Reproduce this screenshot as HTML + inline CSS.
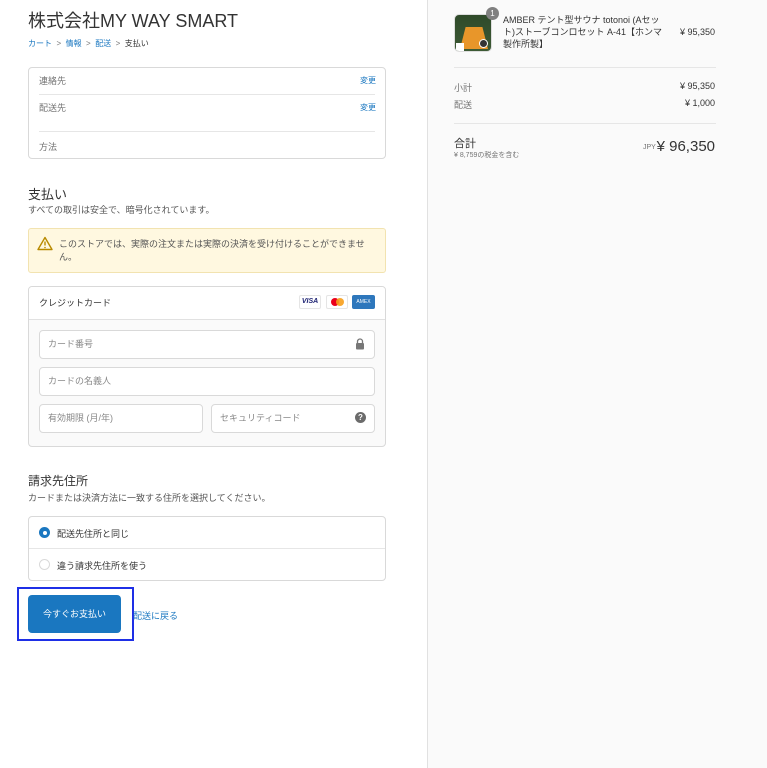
<!DOCTYPE html><html><head><meta charset="utf-8"><style>
*{margin:0;padding:0;box-sizing:border-box}
body{width:767px;height:768px;background:#fff;font-family:"Liberation Sans","Noto Sans CJK JP",sans-serif;color:#333;position:relative;overflow:hidden;font-size:9px}
.a{position:absolute;white-space:nowrap}
.r{position:absolute;white-space:nowrap;right:52px;text-align:right}
.box{position:absolute;border:1px solid #d9d9d9;border-radius:4px;background:#fff}
.hr{position:absolute;height:1px;background:#e6e6e6}
.lbl{color:#737373}
.blue{color:#1a77c0}
.in{position:absolute;border:1px solid #d9d9d9;border-radius:4px;background:#fff;color:#888;font-size:9px;padding-left:8px;line-height:27px}
</style></head><body>
<div class="a" style="left:427px;top:0;width:340px;height:768px;background:#fafafa;border-left:1px solid #e1e1e1"></div>
<div class="a" style="left:28px;top:7px;font-size:18px;color:#333">株式会社MY WAY SMART</div>
<div class="a" style="left:28px;top:38px;font-size:8px"><span class="blue">カート</span> <span style="color:#777">&nbsp;&gt;&nbsp;</span> <span class="blue">情報</span> <span style="color:#777">&nbsp;&gt;&nbsp;</span> <span class="blue">配送</span> <span style="color:#777">&nbsp;&gt;&nbsp;</span> 支払い</div>

<div class="box" style="left:28px;top:67px;width:358px;height:92px"></div>
<div class="a lbl" style="left:39px;top:74px">連絡先</div><div class="a blue" style="left:360px;top:75px;font-size:8px">変更</div>
<div class="hr" style="left:39px;top:94px;width:336px"></div>
<div class="a lbl" style="left:39px;top:101px">配送先</div><div class="a blue" style="left:360px;top:102px;font-size:8px">変更</div>
<div class="hr" style="left:39px;top:131px;width:336px"></div>
<div class="a lbl" style="left:39px;top:140px">方法</div>

<div class="a" style="left:28px;top:184px;font-size:13px">支払い</div>
<div class="a" style="left:28px;top:203px;font-size:9px;color:#555">すべての取引は安全で、暗号化されています。</div>

<div class="a" style="left:28px;top:228px;width:358px;height:45px;background:#fff8e0;border:1px solid #f2e3b0;border-radius:3px"></div>
<svg class="a" style="left:37px;top:236px" width="16" height="15" viewBox="0 0 16 15"><path d="M8 1.5L15 13.5H1Z" fill="none" stroke="#b88a00" stroke-width="1.4" stroke-linejoin="round"/><path d="M8 5.5v4" stroke="#b88a00" stroke-width="1.4"/><circle cx="8" cy="11.5" r=".8" fill="#b88a00"/></svg>
<div class="a" style="left:59px;top:238px;font-size:9px;color:#555;line-height:13px">このストアでは、実際の注文または実際の決済を受け付けることができませ<br>ん。</div>

<div class="box" style="left:28px;top:286px;width:358px;height:161px;background:#fafafa;overflow:hidden"><div style="height:33px;background:#fff;border-bottom:1px solid #e1e1e1"></div></div>
<div class="a" style="left:39px;top:296px;font-size:9px">クレジットカード</div>
<div class="a" style="left:299px;top:295px;width:22px;height:14px;border:1px solid #e5e5e5;border-radius:2px;font-size:7px;font-weight:bold;color:#1a1f71;text-align:center;line-height:12px;font-style:italic">VISA</div>
<div class="a" style="left:326px;top:295px;width:22px;height:14px;border:1px solid #e5e5e5;border-radius:2px"><span class="a" style="left:4px;top:2px;width:8px;height:8px;border-radius:50%;background:#eb001b"></span><span class="a" style="left:9px;top:2px;width:8px;height:8px;border-radius:50%;background:#f79e1b;opacity:.9"></span></div>
<div class="a" style="left:352px;top:295px;width:23px;height:14px;background:#2e77bc;border-radius:2px;font-size:5px;color:#fff;text-align:center;line-height:14px">AMEX</div>
<div class="in" style="left:39px;top:330px;width:336px;height:29px">カード番号</div>
<svg class="a" style="left:355px;top:338px" width="10" height="12" viewBox="0 0 10 12"><path d="M2.5 5V3.5a2.5 2.5 0 0 1 5 0V5" fill="none" stroke="#777" stroke-width="1.3"/><rect x="1" y="5" width="8" height="6.5" rx="1" fill="#777"/></svg>
<div class="in" style="left:39px;top:367px;width:336px;height:29px">カードの名義人</div>
<div class="in" style="left:39px;top:404px;width:164px;height:29px">有効期限 (月/年)</div>
<div class="in" style="left:211px;top:404px;width:164px;height:29px">セキュリティコード</div>
<div class="a" style="left:355px;top:412px;width:11px;height:11px;border-radius:50%;background:#6b6b6b;color:#fff;font-size:8px;font-weight:bold;text-align:center;line-height:11px">?</div>

<div class="a" style="left:28px;top:472px;font-size:12px">請求先住所</div>
<div class="a" style="left:28px;top:491px;font-size:9px;color:#555">カードまたは決済方法に一致する住所を選択してください。</div>
<div class="box" style="left:28px;top:516px;width:358px;height:65px"></div>
<div class="hr" style="left:29px;top:548px;width:356px"></div>
<div class="a" style="left:39px;top:527px;width:11px;height:11px;border-radius:50%;background:#1a77c0"><span class="a" style="left:3.5px;top:3.5px;width:4px;height:4px;border-radius:50%;background:#fff"></span></div>
<div class="a" style="left:57px;top:527px;font-size:9px">配送先住所と同じ</div>
<div class="a" style="left:39px;top:559px;width:11px;height:11px;border-radius:50%;border:1px solid #d9d9d9"></div>
<div class="a" style="left:57px;top:559px;font-size:9px">違う請求先住所を使う</div>

<div class="a" style="left:17px;top:587px;width:117px;height:54px;border:2px solid #1e2fe6"></div>
<div class="a" style="left:28px;top:595px;width:93px;height:38px;background:#1a77c0;border-radius:4px;color:#fff;font-size:9px;text-align:center;line-height:38px">今すぐお支払い</div>
<div class="a blue" style="left:133px;top:609px;font-size:9px">配送に戻る</div>

<div class="a" style="left:454px;top:14px;width:38px;height:38px;border-radius:5px;border:1px solid #ddd;background:linear-gradient(#2f4a2a,#3d5a35);overflow:hidden"><div class="a" style="left:5px;top:12px;width:28px;height:22px;background:#e8962a;clip-path:polygon(20% 0,80% 0,100% 100%,0 100%)"></div><div class="a" style="left:24px;top:24px;width:9px;height:9px;border-radius:50%;background:#333;border:1px solid #fff"></div><div class="a" style="left:1px;top:28px;width:8px;height:9px;background:#fff"></div></div>
<div class="a" style="left:486px;top:7px;width:13px;height:13px;border-radius:50%;background:#808080;color:#fff;font-size:8px;text-align:center;line-height:13px">1</div>
<div class="a" style="left:503px;top:14px;font-size:9px;line-height:12px;color:#333">AMBER テント型サウナ totonoi (Aセッ<br>ト)ストーブコンロセット A-41【ホンマ<br>製作所製】</div>
<div class="r" style="top:27px;font-size:9px">¥ 95,350</div>
<div class="hr" style="left:454px;top:67px;width:262px"></div>
<div class="a lbl" style="left:454px;top:81px">小計</div><div class="r" style="top:81px">¥ 95,350</div>
<div class="a lbl" style="left:454px;top:98px">配送</div><div class="r" style="top:98px">¥ 1,000</div>
<div class="hr" style="left:454px;top:123px;width:262px"></div>
<div class="a" style="left:454px;top:135px;font-size:11px">合計</div>
<div class="a lbl" style="left:454px;top:150px;font-size:7px">¥ 8,759の税金を含む</div>
<div class="a lbl" style="left:643px;top:144px;font-size:7px">JPY</div>
<div class="r" style="top:138px;font-size:15px">¥ 96,350</div>
</body></html>
